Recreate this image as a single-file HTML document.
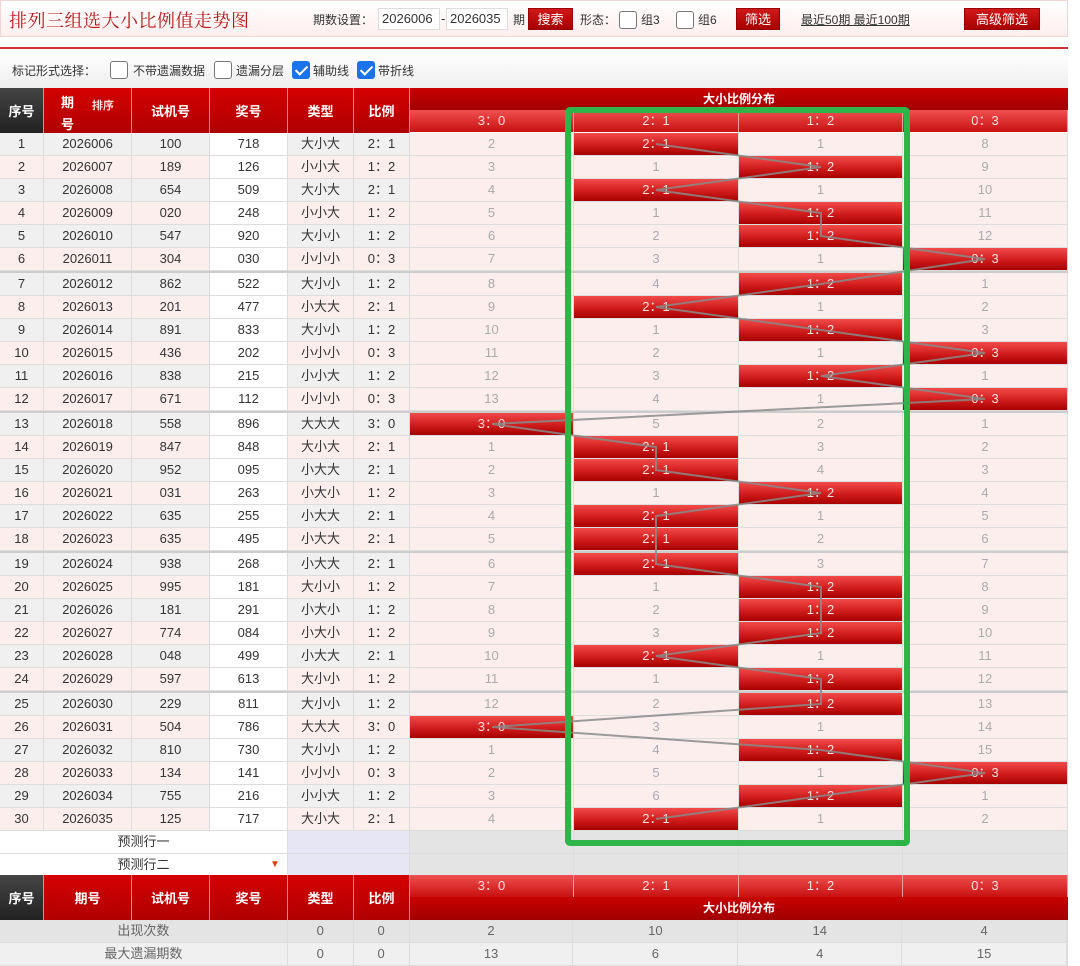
<!DOCTYPE html>
<html><head><meta charset="utf-8">
<style>
*{margin:0;padding:0;box-sizing:border-box}
body{width:1080px;height:954px;overflow:hidden;background:#fff;font-family:"Liberation Sans","Noto Sans CJK SC",sans-serif;font-size:13px;color:#333;position:relative}
.top{position:absolute;left:0;top:0;width:1068px;height:37px;background:linear-gradient(#fff,#fdeeee);border:1px solid #f0d6d6}
.title{position:absolute;left:8px;top:6px;font-family:"Noto Serif CJK SC",serif;font-size:18px;color:#b81818;letter-spacing:0.5px}
.abs{position:absolute;white-space:nowrap}
.inp{position:absolute;top:8px;height:22px;border:1px solid #ddd;background:#fff;font-size:13px;line-height:20px;padding-left:3px;color:#333}
.btn{position:absolute;top:8px;height:22px;background:linear-gradient(#d01818,#a80000);color:#fff;font-size:13px;line-height:22px;text-align:center;border:1px solid #900}
.cb{position:absolute;width:18px;height:18px;border:1px solid #777;border-radius:3px;background:#fff}
.cbc{position:absolute;width:18px;height:18px;border-radius:3px;background:#1a73e8}
.cbc:after{content:"";position:absolute;left:6px;top:2px;width:5px;height:10px;border:solid #fff;border-width:0 2px 2px 0;transform:rotate(45deg)}
.redline{position:absolute;left:0;top:47px;width:1068px;height:2px;background:#c33}
.opt{position:absolute;left:0;top:51px;width:1068px;height:37px;background:linear-gradient(#fff,#eee);font-size:12px}
.tbl{position:absolute;left:0;top:88px;width:1068px}
.r{display:flex;height:23px}
.r>div{border-right:1px solid #ddd;border-bottom:1px solid #ddd;text-align:center;line-height:22px;height:23px;overflow:hidden;white-space:nowrap}
.w0{width:44px}.w1{width:88px}.w2{width:78px}.w3{width:78px}.w4{width:66px}.w5{width:56px}.d0{width:164px}.d1{width:165px}.d2{width:164px}.d3{width:165px}
.o>div{background:#f0f0f0}.e>div{background:#fdeeee}
.r>div.j{background:#fff}
.r>div.d{background:#fdeeee;color:#aaa}
.r>div.h{background:linear-gradient(#f24a4a,#d01c1c 55%,#a80000);color:#fbe0e0}
.sep{height:2px;background:#ccc}
.hd{position:absolute;color:#fff;font-weight:bold;text-align:center;display:flex;align-items:center;justify-content:center;border-right:1px solid #e88}
.hr{background:linear-gradient(#d40000,#b00000)}
.hk{background:linear-gradient(#444,#222)}
.hl{position:absolute;background:linear-gradient(#f05050,#c81010);color:#fbe0e0;text-align:center;line-height:22px;border-right:1px solid #f0a0a0;height:22px}
.hm{position:absolute;background:linear-gradient(#c80000,#a00000);color:#fff;font-weight:bold;text-align:center;line-height:22px;height:22px;font-size:12px}
.ft>div{border-right:1px solid #ddd;border-bottom:1px solid #ddd;text-align:center;line-height:22px}
</style></head><body>
<div class="top">
<div class="title">排列三组选大小比例值走势图</div>
</div>
<div class="abs" style="left:313px;top:11px;font-size:12px">期数设置：</div>
<div class="inp" style="left:378px;width:62px">2026006</div>
<div class="abs" style="left:441px;top:11px">-</div>
<div class="inp" style="left:446px;width:62px">2026035</div>
<div class="abs" style="left:513px;top:11px;font-size:12px">期</div>
<div class="btn" style="left:528px;width:45px">搜索</div>
<div class="abs" style="left:580px;top:11px;font-size:12px">形态：</div>
<div class="cb" style="left:619px;top:11px"></div>
<div class="abs" style="left:641px;top:11px;font-size:12px">组3</div>
<div class="cb" style="left:676px;top:11px"></div>
<div class="abs" style="left:698px;top:11px;font-size:12px">组6</div>
<div class="btn" style="left:736px;width:44px">筛选</div>
<div class="abs" style="left:801px;top:11px;font-size:12px;text-decoration:underline">最近50期 最近100期</div>
<div class="btn" style="left:964px;width:76px">高级筛选</div>
<div class="redline"></div>
<div class="opt">
<div class="abs" style="left:12px;top:11px">标记形式选择：</div>
<div class="cb" style="left:110px;top:10px"></div>
<div class="abs" style="left:133px;top:11px">不带遗漏数据</div>
<div class="cb" style="left:214px;top:10px"></div>
<div class="abs" style="left:236px;top:11px">遗漏分层</div>
<div class="cbc" style="left:292px;top:10px"></div>
<div class="abs" style="left:313px;top:11px">辅助线</div>
<div class="cbc" style="left:357px;top:10px"></div>
<div class="abs" style="left:378px;top:11px">带折线</div>
</div>

<!-- header -->
<div class="hd hk" style="left:0;top:88px;width:44px;height:45px">序号</div>
<div class="hd hr" style="left:44px;top:88px;width:88px;height:45px"><span style="position:absolute;left:17px;top:4px">期</span><span style="position:absolute;left:17px;top:26px">号</span><span style="position:absolute;left:48px;top:9px;font-size:11px;color:#fdd">排序</span></div>
<div class="hd hr" style="left:132px;top:88px;width:78px;height:45px">试机号</div>
<div class="hd hr" style="left:210px;top:88px;width:78px;height:45px">奖号</div>
<div class="hd hr" style="left:288px;top:88px;width:66px;height:45px">类型</div>
<div class="hd hr" style="left:354px;top:88px;width:56px;height:45px">比例</div>
<div class="hm" style="left:410px;top:88px;width:658px">大小比例分布</div>
<div class="hl" style="left:410px;top:110px;width:164px">3：0</div>
<div class="hl" style="left:574px;top:110px;width:165px">2：1</div>
<div class="hl" style="left:739px;top:110px;width:164px">1：2</div>
<div class="hl" style="left:903px;top:110px;width:165px">0：3</div>

<div class="tbl" style="top:133px">
<div class="r o"><div class="w0">1</div><div class="w1">2026006</div><div class="w2">100</div><div class="w3 j">718</div><div class="w4">大小大</div><div class="w5">2：1</div><div class="d0 d">2</div><div class="d1 h">2：1</div><div class="d2 d">1</div><div class="d3 d">8</div></div>
<div class="r e"><div class="w0">2</div><div class="w1">2026007</div><div class="w2">189</div><div class="w3 j">126</div><div class="w4">小小大</div><div class="w5">1：2</div><div class="d0 d">3</div><div class="d1 d">1</div><div class="d2 h">1：2</div><div class="d3 d">9</div></div>
<div class="r o"><div class="w0">3</div><div class="w1">2026008</div><div class="w2">654</div><div class="w3 j">509</div><div class="w4">大小大</div><div class="w5">2：1</div><div class="d0 d">4</div><div class="d1 h">2：1</div><div class="d2 d">1</div><div class="d3 d">10</div></div>
<div class="r e"><div class="w0">4</div><div class="w1">2026009</div><div class="w2">020</div><div class="w3 j">248</div><div class="w4">小小大</div><div class="w5">1：2</div><div class="d0 d">5</div><div class="d1 d">1</div><div class="d2 h">1：2</div><div class="d3 d">11</div></div>
<div class="r o"><div class="w0">5</div><div class="w1">2026010</div><div class="w2">547</div><div class="w3 j">920</div><div class="w4">大小小</div><div class="w5">1：2</div><div class="d0 d">6</div><div class="d1 d">2</div><div class="d2 h">1：2</div><div class="d3 d">12</div></div>
<div class="r e"><div class="w0">6</div><div class="w1">2026011</div><div class="w2">304</div><div class="w3 j">030</div><div class="w4">小小小</div><div class="w5">0：3</div><div class="d0 d">7</div><div class="d1 d">3</div><div class="d2 d">1</div><div class="d3 h">0：3</div></div>
<div class="sep"></div>
<div class="r o"><div class="w0">7</div><div class="w1">2026012</div><div class="w2">862</div><div class="w3 j">522</div><div class="w4">大小小</div><div class="w5">1：2</div><div class="d0 d">8</div><div class="d1 d">4</div><div class="d2 h">1：2</div><div class="d3 d">1</div></div>
<div class="r e"><div class="w0">8</div><div class="w1">2026013</div><div class="w2">201</div><div class="w3 j">477</div><div class="w4">小大大</div><div class="w5">2：1</div><div class="d0 d">9</div><div class="d1 h">2：1</div><div class="d2 d">1</div><div class="d3 d">2</div></div>
<div class="r o"><div class="w0">9</div><div class="w1">2026014</div><div class="w2">891</div><div class="w3 j">833</div><div class="w4">大小小</div><div class="w5">1：2</div><div class="d0 d">10</div><div class="d1 d">1</div><div class="d2 h">1：2</div><div class="d3 d">3</div></div>
<div class="r e"><div class="w0">10</div><div class="w1">2026015</div><div class="w2">436</div><div class="w3 j">202</div><div class="w4">小小小</div><div class="w5">0：3</div><div class="d0 d">11</div><div class="d1 d">2</div><div class="d2 d">1</div><div class="d3 h">0：3</div></div>
<div class="r o"><div class="w0">11</div><div class="w1">2026016</div><div class="w2">838</div><div class="w3 j">215</div><div class="w4">小小大</div><div class="w5">1：2</div><div class="d0 d">12</div><div class="d1 d">3</div><div class="d2 h">1：2</div><div class="d3 d">1</div></div>
<div class="r e"><div class="w0">12</div><div class="w1">2026017</div><div class="w2">671</div><div class="w3 j">112</div><div class="w4">小小小</div><div class="w5">0：3</div><div class="d0 d">13</div><div class="d1 d">4</div><div class="d2 d">1</div><div class="d3 h">0：3</div></div>
<div class="sep"></div>
<div class="r o"><div class="w0">13</div><div class="w1">2026018</div><div class="w2">558</div><div class="w3 j">896</div><div class="w4">大大大</div><div class="w5">3：0</div><div class="d0 h">3：0</div><div class="d1 d">5</div><div class="d2 d">2</div><div class="d3 d">1</div></div>
<div class="r e"><div class="w0">14</div><div class="w1">2026019</div><div class="w2">847</div><div class="w3 j">848</div><div class="w4">大小大</div><div class="w5">2：1</div><div class="d0 d">1</div><div class="d1 h">2：1</div><div class="d2 d">3</div><div class="d3 d">2</div></div>
<div class="r o"><div class="w0">15</div><div class="w1">2026020</div><div class="w2">952</div><div class="w3 j">095</div><div class="w4">小大大</div><div class="w5">2：1</div><div class="d0 d">2</div><div class="d1 h">2：1</div><div class="d2 d">4</div><div class="d3 d">3</div></div>
<div class="r e"><div class="w0">16</div><div class="w1">2026021</div><div class="w2">031</div><div class="w3 j">263</div><div class="w4">小大小</div><div class="w5">1：2</div><div class="d0 d">3</div><div class="d1 d">1</div><div class="d2 h">1：2</div><div class="d3 d">4</div></div>
<div class="r o"><div class="w0">17</div><div class="w1">2026022</div><div class="w2">635</div><div class="w3 j">255</div><div class="w4">小大大</div><div class="w5">2：1</div><div class="d0 d">4</div><div class="d1 h">2：1</div><div class="d2 d">1</div><div class="d3 d">5</div></div>
<div class="r e"><div class="w0">18</div><div class="w1">2026023</div><div class="w2">635</div><div class="w3 j">495</div><div class="w4">小大大</div><div class="w5">2：1</div><div class="d0 d">5</div><div class="d1 h">2：1</div><div class="d2 d">2</div><div class="d3 d">6</div></div>
<div class="sep"></div>
<div class="r o"><div class="w0">19</div><div class="w1">2026024</div><div class="w2">938</div><div class="w3 j">268</div><div class="w4">小大大</div><div class="w5">2：1</div><div class="d0 d">6</div><div class="d1 h">2：1</div><div class="d2 d">3</div><div class="d3 d">7</div></div>
<div class="r e"><div class="w0">20</div><div class="w1">2026025</div><div class="w2">995</div><div class="w3 j">181</div><div class="w4">大小小</div><div class="w5">1：2</div><div class="d0 d">7</div><div class="d1 d">1</div><div class="d2 h">1：2</div><div class="d3 d">8</div></div>
<div class="r o"><div class="w0">21</div><div class="w1">2026026</div><div class="w2">181</div><div class="w3 j">291</div><div class="w4">小大小</div><div class="w5">1：2</div><div class="d0 d">8</div><div class="d1 d">2</div><div class="d2 h">1：2</div><div class="d3 d">9</div></div>
<div class="r e"><div class="w0">22</div><div class="w1">2026027</div><div class="w2">774</div><div class="w3 j">084</div><div class="w4">小大小</div><div class="w5">1：2</div><div class="d0 d">9</div><div class="d1 d">3</div><div class="d2 h">1：2</div><div class="d3 d">10</div></div>
<div class="r o"><div class="w0">23</div><div class="w1">2026028</div><div class="w2">048</div><div class="w3 j">499</div><div class="w4">小大大</div><div class="w5">2：1</div><div class="d0 d">10</div><div class="d1 h">2：1</div><div class="d2 d">1</div><div class="d3 d">11</div></div>
<div class="r e"><div class="w0">24</div><div class="w1">2026029</div><div class="w2">597</div><div class="w3 j">613</div><div class="w4">大小小</div><div class="w5">1：2</div><div class="d0 d">11</div><div class="d1 d">1</div><div class="d2 h">1：2</div><div class="d3 d">12</div></div>
<div class="sep"></div>
<div class="r o"><div class="w0">25</div><div class="w1">2026030</div><div class="w2">229</div><div class="w3 j">811</div><div class="w4">大小小</div><div class="w5">1：2</div><div class="d0 d">12</div><div class="d1 d">2</div><div class="d2 h">1：2</div><div class="d3 d">13</div></div>
<div class="r e"><div class="w0">26</div><div class="w1">2026031</div><div class="w2">504</div><div class="w3 j">786</div><div class="w4">大大大</div><div class="w5">3：0</div><div class="d0 h">3：0</div><div class="d1 d">3</div><div class="d2 d">1</div><div class="d3 d">14</div></div>
<div class="r o"><div class="w0">27</div><div class="w1">2026032</div><div class="w2">810</div><div class="w3 j">730</div><div class="w4">大小小</div><div class="w5">1：2</div><div class="d0 d">1</div><div class="d1 d">4</div><div class="d2 h">1：2</div><div class="d3 d">15</div></div>
<div class="r e"><div class="w0">28</div><div class="w1">2026033</div><div class="w2">134</div><div class="w3 j">141</div><div class="w4">小小小</div><div class="w5">0：3</div><div class="d0 d">2</div><div class="d1 d">5</div><div class="d2 d">1</div><div class="d3 h">0：3</div></div>
<div class="r o"><div class="w0">29</div><div class="w1">2026034</div><div class="w2">755</div><div class="w3 j">216</div><div class="w4">小小大</div><div class="w5">1：2</div><div class="d0 d">3</div><div class="d1 d">6</div><div class="d2 h">1：2</div><div class="d3 d">1</div></div>
<div class="r e"><div class="w0">30</div><div class="w1">2026035</div><div class="w2">125</div><div class="w3 j">717</div><div class="w4">大小大</div><div class="w5">2：1</div><div class="d0 d">4</div><div class="d1 h">2：1</div><div class="d2 d">1</div><div class="d3 d">2</div></div>
<div class="r ft"><div style="width:288px;background:#fff">预测行一</div><div style="width:122px;background:#e6e6f5"></div><div class="d0" style="background:#e4e4e4"></div><div class="d1" style="background:#e4e4e4"></div><div class="d2" style="background:#e4e4e4"></div><div class="d3" style="background:#e4e4e4"></div></div>
<div class="r ft" style="height:22px"><div style="width:288px;background:#fff;position:relative">预测行二<span style="position:absolute;left:270px;top:0;color:#e04010;font-size:10px">▼</span></div><div style="width:122px;background:#e6e6f5"></div><div class="d0" style="background:#e4e4e4"></div><div class="d1" style="background:#e4e4e4"></div><div class="d2" style="background:#e4e4e4"></div><div class="d3" style="background:#e4e4e4"></div></div>
</div>

<!-- footer header -->
<div class="hd hk" style="left:0;top:875px;width:44px;height:45px">序号</div>
<div class="hd hr" style="left:44px;top:875px;width:88px;height:45px">期号</div>
<div class="hd hr" style="left:132px;top:875px;width:78px;height:45px">试机号</div>
<div class="hd hr" style="left:210px;top:875px;width:78px;height:45px">奖号</div>
<div class="hd hr" style="left:288px;top:875px;width:66px;height:45px">类型</div>
<div class="hd hr" style="left:354px;top:875px;width:56px;height:45px">比例</div>
<div class="hl" style="left:410px;top:875px;width:164px">3：0</div>
<div class="hl" style="left:574px;top:875px;width:165px">2：1</div>
<div class="hl" style="left:739px;top:875px;width:164px">1：2</div>
<div class="hl" style="left:903px;top:875px;width:165px">0：3</div>
<div class="hm" style="left:410px;top:897px;width:658px;height:23px">大小比例分布</div>
<div class="tbl ft" style="top:920px;color:#666">
<div class="r" style="background:#e4e4e4"><div style="width:288px">出现次数</div><div class="w4">0</div><div class="w5">0</div><div class="d0">2</div><div class="d1">10</div><div class="d2">14</div><div class="d3">4</div></div>
<div class="r" style="background:#f0f0f0"><div style="width:288px">最大遗漏期数</div><div class="w4">0</div><div class="w5">0</div><div class="d0">13</div><div class="d1">6</div><div class="d2">4</div><div class="d3">15</div></div>
</div>

<svg style="position:absolute;left:0;top:0" width="1080" height="954">
<polyline fill="none" stroke="#8a8a8a" stroke-opacity="0.85" stroke-width="2" points="656,144 821,167 656,190 821,213 821,236 985,259 821,284 656,307 821,330 985,353 821,376 985,399 492,424 656,447 656,470 821,493 656,516 656,539 656,564 821,587 821,610 821,633 656,656 821,679 821,704 492,727 821,750 985,773 821,796 656,819"/>
</svg>
<div style="position:absolute;left:565px;top:107px;width:345px;height:739px;border:6px solid #2db54a;border-radius:5px"></div>
</body></html>
